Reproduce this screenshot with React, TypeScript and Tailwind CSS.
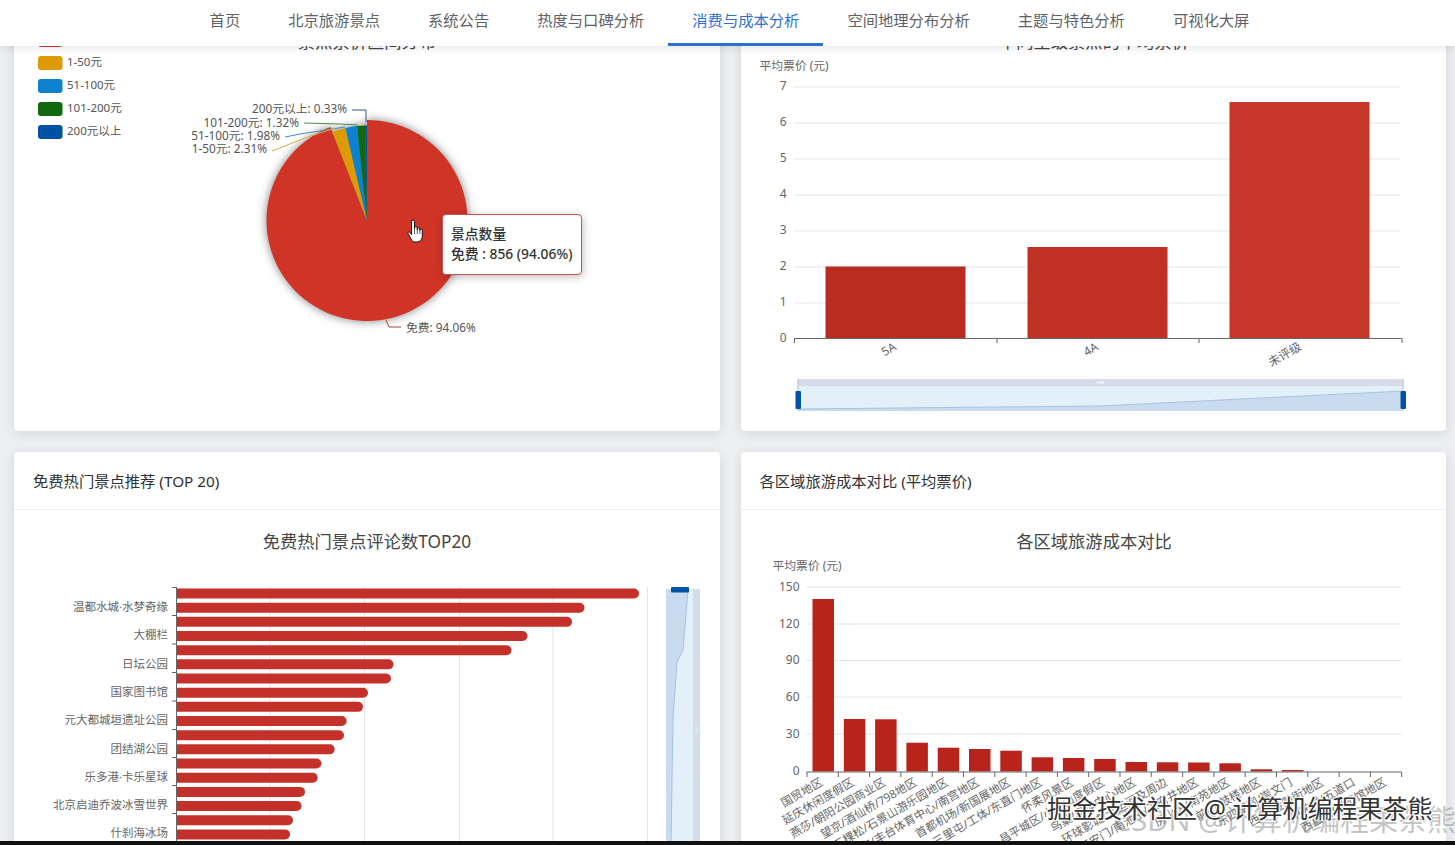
const navItems = ["首页", "北京旅游景点", "系统公告", "热度与口碑分析", "消费与成本分析", "空间地理分布分析", "主题与特色分析", "可视化大屏"];

const legend = [
  { name: "免费", color: "#d03427" },
  { name: "1-50元", color: "#dc9b04" },
  { name: "51-100元", color: "#0a82cf" },
  { name: "101-200元", color: "#10690f" },
  { name: "200元以上", color: "#0052a4" },
];

// pie slices in degrees, clockwise from the top
const slices = [
  { from: 0, to: 338.6, r: 100.5, color: "#d03427" },
  { from: 338.6, to: 346.9, r: 95, color: "#dc9b04" },
  { from: 346.9, to: 354, r: 95, color: "#0a82cf" },
  { from: 354, to: 358.8, r: 95, color: "#10690f" },
  { from: 358.8, to: 360, r: 95, color: "#0052a4" },
];

const pieLabels = [
  { text: "200元以上: 0.33%", x: 347, y: 108.3, line: "352,110 366,110 366,122", color: "#31598a" },
  { text: "101-200元: 1.32%", x: 299, y: 121.8, line: "304,123 340,124 358,125", color: "#4d8a4d" },
  { text: "51-100元: 1.98%", x: 280, y: 135.3, line: "285,137 300,134 345,127", color: "#3b8fc4" },
  { text: "1-50元: 2.31%", x: 267, y: 148.3, line: "272,151 305,138 335,128", color: "#d3b04a" },
];

const rankBars = [639, 584.5, 572, 527.5, 511.5, 393.5, 391, 368, 363, 346.6, 344, 334.7, 321.4, 317.7, 305, 301.6, 293, 290];
const rankNames = ["温都水城·水梦奇缘", "大棚栏", "日坛公园", "国家图书馆", "元大都城垣遗址公园", "团结湖公园", "乐多港·卡乐星球", "北京启迪乔波冰雪世界", "什刹海冰场"];

const areaTops = [599, 719, 719.3, 742.7, 747.7, 749, 750.7, 757.3, 758, 759, 762, 762.3, 762.5, 763.3, 769.3, 770];
const areaNames = [
  "国贸地区", "延庆休闲度假区", "燕莎/朝阳公园商业区", "望京/酒仙桥/798地区", "五棵松/石景山游乐园地区",
  "方庄/丰台体育中心/南宫地区", "首都机场/新国展地区", "三里屯/工体/东直门地区", "怀柔风景区", "昌平城区/小汤山度假区",
  "鸟巢/奥体中心地区", "环球影城/大运河及周边", "天安门/南池子/王府井地区", "房山区/南苑地区", "前门/鼓楼地区",
  "东四胡同/崇文门", "西单/金融街地区", "中关村/五道口", "西直门/展览馆地区",
];
const areaTicks = Array.from({ length: 20 }, (_, i) => 806.5 + i * 31.3);

function arc(cx: number, cy: number, r: number, from: number, to: number) {
  const a = (from * Math.PI) / 180;
  const b = (to * Math.PI) / 180;
  const large = to - from > 180 ? 1 : 0;
  return `M${cx} ${cy}L${cx + r * Math.sin(a)} ${cy - r * Math.cos(a)}A${r} ${r} 0 ${large} 1 ${cx + r * Math.sin(b)} ${cy - r * Math.cos(b)}Z`;
}

function Card({ title, children }: { title: string; children: React.ReactNode }) {
  return (
    <section className="h-[479px] overflow-hidden rounded-[4px] bg-white shadow-[0_2px_12px_rgba(0,0,0,0.1)]">
      <div className="flex h-[58px] items-center border-b border-[#ebeef5] px-[19px] pt-[1px] text-[15.3px] text-[#303133]">{title}</div>
      <div className="relative h-[421px]">{children}</div>
    </section>
  );
}

function PriceChart() {
  return (
    <svg className="block h-[421px] w-full">
      <g transform="translate(-14,-10)">
        <text x="367" y="41" textAnchor="middle" dominantBaseline="central" fontSize="17.3" fill="#464646">景点票价区间分布</text>
        {legend.map((item, i) => (
          <g key={item.name}>
            <rect x="38" y={33 + i * 23} width="24.5" height="14" rx="3" fill={item.color} />
            <text x="67" y={38.5 + i * 23} dominantBaseline="central" fontSize="11.5" fill="#555">{item.name}</text>
          </g>
        ))}
        <g className="drop-shadow-[0_0_5px_rgba(0,0,0,0.5)]">
          {slices.map((s) => (
            <path key={s.from} d={arc(367, 220.5, s.r, s.from, s.to)} fill={s.color} />
          ))}
        </g>
        {pieLabels.map((l) => (
          <g key={l.text}>
            <polyline points={l.line} fill="none" stroke={l.color} strokeWidth="1" />
            <text x={l.x} y={l.y} textAnchor="end" dominantBaseline="central" fontSize="11.8" fill="#555">{l.text}</text>
          </g>
        ))}
        <polyline points="386,320 389,327 401,327" fill="none" stroke="#a8473d" strokeWidth="1" />
        <text x="406" y="326.5" dominantBaseline="central" fontSize="11.8" fill="#555">免费: 94.06%</text>
      </g>
    </svg>
  );
}

function StarChart() {
  const lines = [87, 123, 159, 195, 231, 267, 303];
  const ticks = [793.5, 996, 1198, 1401];
  return (
    <svg className="block h-[421px] w-full">
      <g transform="translate(-740.5,-10)">
        <text x="1093.5" y="41" textAnchor="middle" dominantBaseline="central" fontSize="17.3" fill="#464646">不同星级景点的平均票价</text>
        <text x="759" y="65" dominantBaseline="central" fontSize="11.8" fill="#666">平均票价 (元)</text>
        {lines.map((y, i) => (
          <g key={y}>
            <line x1="794" x2="1400" y1={y} y2={y} stroke="#e4e4e4" />
            <text x="786" y={y - 1.5} textAnchor="end" dominantBaseline="central" fontSize="12" fill="#666">{7 - i}</text>
          </g>
        ))}
        <text x="786" y="337.5" textAnchor="end" dominantBaseline="central" fontSize="12" fill="#666">0</text>
        <rect x="825" y="266.5" width="140" height="71.5" fill="#bb2c20" />
        <rect x="1027" y="247" width="140" height="91" fill="#c03024" />
        <rect x="1229" y="102" width="140" height="236" fill="#c5352a" />
        <line x1="793.5" x2="1401" y1="338.5" y2="338.5" stroke="#666" />
        {ticks.map((x) => (
          <line key={x} x1={x + 0.5} x2={x + 0.5} y1="338" y2="343" stroke="#666" />
        ))}
        <text transform="translate(888,349) rotate(-30)" textAnchor="middle" dominantBaseline="central" fontSize="12" fill="#666">5A</text>
        <text transform="translate(1090,349) rotate(-30)" textAnchor="middle" dominantBaseline="central" fontSize="12" fill="#666">4A</text>
        <text transform="translate(1284,354) rotate(-30)" textAnchor="middle" dominantBaseline="central" fontSize="12" fill="#666">未评级</text>
        {/* data zoom */}
        <rect x="797" y="379" width="606" height="7" fill="#d5dbe8" />
        <rect x="797" y="386" width="606" height="25" fill="#e3eff9" />
        <polygon points="797,409 1100,406 1403,391 1403,411 797,411" fill="#c9dcef" />
        <polyline points="797,409 1100,406 1403,391" fill="none" stroke="#a8c2de" />
        <rect x="1096" y="381.5" width="8" height="2" fill="#f0f3f8" />
        <line x1="797.5" x2="797.5" y1="379" y2="411" stroke="#b9c4d6" />
        <line x1="1402.5" x2="1402.5" y1="379" y2="411" stroke="#b9c4d6" />
        <rect x="795" y="391" width="5.5" height="18" rx="1" fill="#0052a4" />
        <rect x="1400" y="391" width="5.5" height="18" rx="1" fill="#0052a4" />
      </g>
    </svg>
  );
}

function FreeRankChart() {
  const ticks = [587, 615, 643.5, 672, 700.5, 729, 757, 785, 813, 841];
  const grid = [270, 364.5, 459.5, 553, 647.5];
  return (
    <svg className="block h-[421px] w-full">
      <g transform="translate(-14,-510)">
        <text x="367" y="541" textAnchor="middle" dominantBaseline="central" fontSize="17.3" fill="#464646">免费热门景点评论数TOP20</text>
        {grid.map((x) => (
          <line key={x} x1={x} x2={x} y1="587" y2="931" stroke="#e2e4e8" />
        ))}
        {rankBars.map((right, i) => {
          const top = 588.5 + i * 14.17;
          return <path key={i} d={`M176 ${top}H${right - 5}a5 5 0 0 1 0 10H176Z`} fill="#c4302a" />;
        })}
        <line x1="176.5" x2="176.5" y1="587" y2="931" stroke="#666" />
        {ticks.map((y) => (
          <line key={y} x1="172" x2="176" y1={y + 0.5} y2={y + 0.5} stroke="#666" />
        ))}
        {rankNames.map((name, i) => (
          <text key={name} x="168" y={606.5 + i * 28.3} textAnchor="end" dominantBaseline="central" fontSize="11.5" fill="#666">{name}</text>
        ))}
        {/* vertical data zoom */}
        <rect x="666" y="589" width="27" height="342" fill="#e3eff9" />
        <rect x="693" y="589" width="7" height="342" fill="#d3dce9" />
        <polygon points="666,589 688,590 683,650 677,662 673,718 671,845 666,845" fill="#c9dcef" />
        <polyline points="688,590 683,650 677,662 673,718 671,845" fill="none" stroke="#a8c2de" />
        <line x1="695" x2="698" y1="728" y2="728" stroke="#f0f3f8" />
        <line x1="695" x2="698" y1="730.5" y2="730.5" stroke="#f0f3f8" />
        <line x1="695" x2="698" y1="733" y2="733" stroke="#f0f3f8" />
        <rect x="671" y="587" width="18" height="5.5" rx="1" fill="#0052a4" />
      </g>
    </svg>
  );
}

function AreaChart() {
  const lines = [
    { y: 587, label: "150" },
    { y: 624, label: "120" },
    { y: 660.5, label: "90" },
    { y: 697, label: "60" },
    { y: 734, label: "30" },
  ];
  return (
    <svg className="block h-[421px] w-full">
      <g transform="translate(-740.5,-510)">
        <text x="1093.5" y="541" textAnchor="middle" dominantBaseline="central" fontSize="17.3" fill="#464646">各区域旅游成本对比</text>
        <text x="772" y="565" dominantBaseline="central" fontSize="11.8" fill="#666">平均票价 (元)</text>
        {lines.map((l) => (
          <g key={l.y}>
            <line x1="806" x2="1401" y1={l.y} y2={l.y} stroke="#e4e4e4" />
            <text x="799" y={l.y - 1} textAnchor="end" dominantBaseline="central" fontSize="12" fill="#666">{l.label}</text>
          </g>
        ))}
        <text x="799" y="770" textAnchor="end" dominantBaseline="central" fontSize="12" fill="#666">0</text>
        {areaTops.map((top, i) => (
          <rect key={i} x={812 + i * 31.3} y={top} width="21.5" height={771.5 - top} fill="#b8241c" />
        ))}
        <line x1="806" x2="1401" y1="772" y2="772" stroke="#666" />
        {areaTicks.map((x) => (
          <line key={x} x1={x} x2={x} y1="772" y2="777" stroke="#666" />
        ))}
        {areaNames.map((name, i) => (
          <text key={name} transform={`translate(${821 + i * 31.3},780.5) rotate(-30)`} textAnchor="end" dominantBaseline="central" fontSize="11.5" fill="#666">{name}</text>
        ))}
      </g>
    </svg>
  );
}

export default function App() {
  return (
    <div className="relative h-screen overflow-hidden bg-[#eceef2] font-['Noto_Sans','Noto_Sans_CJK_SC',sans-serif]">
      {/* Top nav */}
      <nav className="absolute inset-x-0 top-0 z-10 flex h-[46px] justify-center bg-white pl-[4px] shadow-[0_2px_8px_rgba(0,0,0,0.1)]">
        {navItems.map((item) => (
          <div
            key={item}
            className={
              item === "消费与成本分析"
                ? "flex items-center border-b-[3px] border-[#2f6fd0] px-6 pb-[3px] text-[15.3px] text-[#2f6fd0]"
                : "flex items-center px-6 pb-[6px] text-[15.3px] text-[#606266]"
            }
          >
            {item}
          </div>
        ))}
      </nav>

      {/* Cards */}
      <main className="-mt-[48px] grid grid-cols-2 gap-[21px] pl-[14px] pr-[9px]">
        <Card title="景点票价区间分布">
          <PriceChart />
          {/* tooltip */}
          <div className="absolute left-[428px] top-[204px] h-[61px] w-[140px] rounded-[4px] border border-[#c0564c] bg-white pl-2 pt-[9px] text-[13.8px] font-medium leading-[20px] text-[#333] shadow-[1px_2px_8px_rgba(0,0,0,0.25)]">
            <div>景点数量</div>
            <div className="whitespace-nowrap">免费 : 856 (94.06%)</div>
          </div>
          {/* hand cursor */}
          <svg viewBox="0 0 17 24" className="absolute left-[393px] top-[209px] h-6 w-[17px]" fill="#fff" stroke="#111" strokeWidth="1" strokeLinejoin="round">
            <path d="M4.5 2.5a1.5 1.5 0 0 1 3 0V10V9a1.4 1.4 0 0 1 2.8 0v2V10a1.3 1.3 0 0 1 2.6 0v1.5V11a1.2 1.2 0 0 1 2.4 0v6c0 3-2 6-5 6H8c-2 0-3-1-4-3l-3-5.5c-.6-1.2 1-2.2 2-1l1.5 2Z" />
            <path d="M7.5 10v5M10.3 11v4M12.9 11.5V15" fill="none" strokeWidth="0.7" />
          </svg>
        </Card>
        <Card title="不同星级景点的平均票价">
          <StarChart />
        </Card>
        <Card title="免费热门景点推荐 (TOP 20)">
          <FreeRankChart />
        </Card>
        <Card title="各区域旅游成本对比 (平均票价)">
          <AreaChart />
        </Card>
      </main>

      {/* Video watermark */}
      <div className="absolute left-[1113px] top-[798px] z-20 whitespace-nowrap text-[29px] leading-[44px] text-[#8a8a8a]/50">CSDN @计算机编程果茶熊</div>
      <div className="absolute left-[1047px] top-[790px] z-20 whitespace-nowrap text-[25px] leading-[36px] text-[#333] [text-shadow:0_0_2px_#fff,1px_1px_1px_#fff,-1px_-1px_1px_#fff,1px_-1px_1px_#fff,-1px_1px_1px_#fff]">掘金技术社区 @ 计算机编程果茶熊</div>
      <div className="absolute inset-x-0 bottom-0 z-30 h-[4px] bg-[#111]" />
    </div>
  );
}
